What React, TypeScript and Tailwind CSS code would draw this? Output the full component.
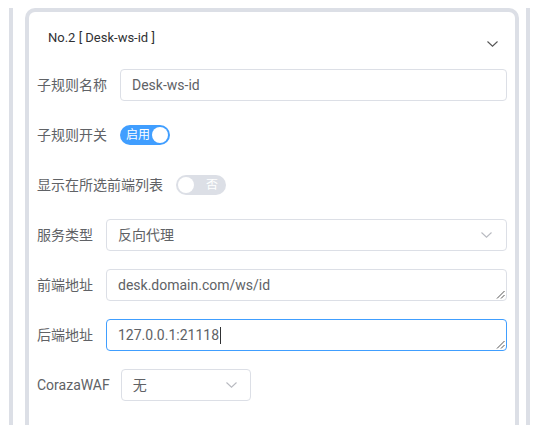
import React from "react";

const font = { fontFamily: 'Roboto, "Noto Sans CJK SC", sans-serif' };

function Chevron({ className = "" }: { className?: string }) {
  return (
    <svg width="11" height="6" viewBox="0 0 11 6" className={className} fill="none">
      <path d="M0.5 0.5 L5.5 5.2 L10.5 0.5" stroke="currentColor" strokeWidth="1.1" />
    </svg>
  );
}

function Grip() {
  return (
    <svg width="9" height="9" viewBox="0 0 9 9" className="absolute right-[1px] bottom-[1px]">
      <path d="M8.5 1 L1 8.5 M8.5 5 L5 8.5" stroke="#555" strokeWidth="1" />
    </svg>
  );
}

function Row({ label, children, gap = "mr-[13px]" }: { label: string; children: React.ReactNode; gap?: string }) {
  return (
    <div className="flex h-[32px] items-center mb-[18px]">
      <div className={`${gap} text-[14px] leading-[32px] text-[#606266] whitespace-nowrap`}>{label}</div>
      {children}
    </div>
  );
}

export default function App() {
  return (
    <div className="w-[538px] h-[425px] overflow-hidden bg-white" style={font}>
      <div className="ml-[9px] w-[521px] h-[425px] border-l-[4px] border-r-[4px] border-[#dcdfe6] pl-[12px] pr-[7px]">
        <div className="mt-[8px] h-[600px] border-[4px] border-b-0 border-[#dcdfe6] rounded-t-[10px] bg-white">
          <div className="flex h-[52px] items-center justify-between pl-[19px] pr-[17px]">
            <span className="text-[13px] text-[#303133]">No.2 [ Desk-ws-id ]</span>
            <Chevron className="mt-[12px] text-[#555]" />
          </div>
          <div className="pt-[5px] pl-[8px] pr-[8px]">
            <Row label="子规则名称">
              <div className="flex-1 h-[32px] border border-[#dcdfe6] rounded-[4px] px-[11px] flex items-center text-[14px] text-[#606266]">
                Desk-ws-id
              </div>
            </Row>
            <Row label="子规则开关">
              <div className="flex h-[20px] w-[50px] items-center rounded-full bg-[#409eff] pl-[6px] pr-[2px]">
                <span className="text-[12px] leading-none text-white flex-1">启用</span>
                <span className="h-[16px] w-[16px] rounded-full bg-white" />
              </div>
            </Row>
            <Row label="显示在所选前端列表">
              <div className="flex h-[20px] w-[50px] items-center rounded-full bg-[#dcdfe6] pl-[2px] pr-[8px]">
                <span className="h-[16px] w-[16px] rounded-full bg-white" />
                <span className="text-[12px] leading-none text-white flex-1 text-right">否</span>
              </div>
            </Row>
            <Row label="服务类型">
              <div className="flex-1 h-[32px] border border-[#dcdfe6] rounded-[4px] pl-[11px] pr-[14px] flex items-center justify-between text-[14px] text-[#606266]">
                <span>反向代理</span>
                <Chevron className="text-[#b8bac0]" />
              </div>
            </Row>
            <Row label="前端地址">
              <div className="relative flex-1 h-[32px] border border-[#dcdfe6] rounded-[4px] px-[11px] flex items-center text-[14px] text-[#606266]">
                <span>desk.domain.com/ws/id</span>
                <Grip />
              </div>
            </Row>
            <Row label="后端地址">
              <div className="relative flex-1 h-[32px] border border-[#409eff] rounded-[4px] px-[11px] flex items-center text-[14px] text-[#606266]">
                <span>127.0.0.1:21118</span>
                <span className="ml-[1px] h-[17px] w-[1px] bg-[#303133]" />
                <Grip />
              </div>
            </Row>
            <Row label="CorazaWAF" gap="mr-[11px]">
              <div className="w-[130px] h-[32px] border border-[#dcdfe6] rounded-[4px] pl-[11px] pr-[13px] flex items-center justify-between text-[14px] text-[#606266]">
                <span>无</span>
                <Chevron className="text-[#b8bac0]" />
              </div>
            </Row>
          </div>
        </div>
      </div>
    </div>
  );
}
